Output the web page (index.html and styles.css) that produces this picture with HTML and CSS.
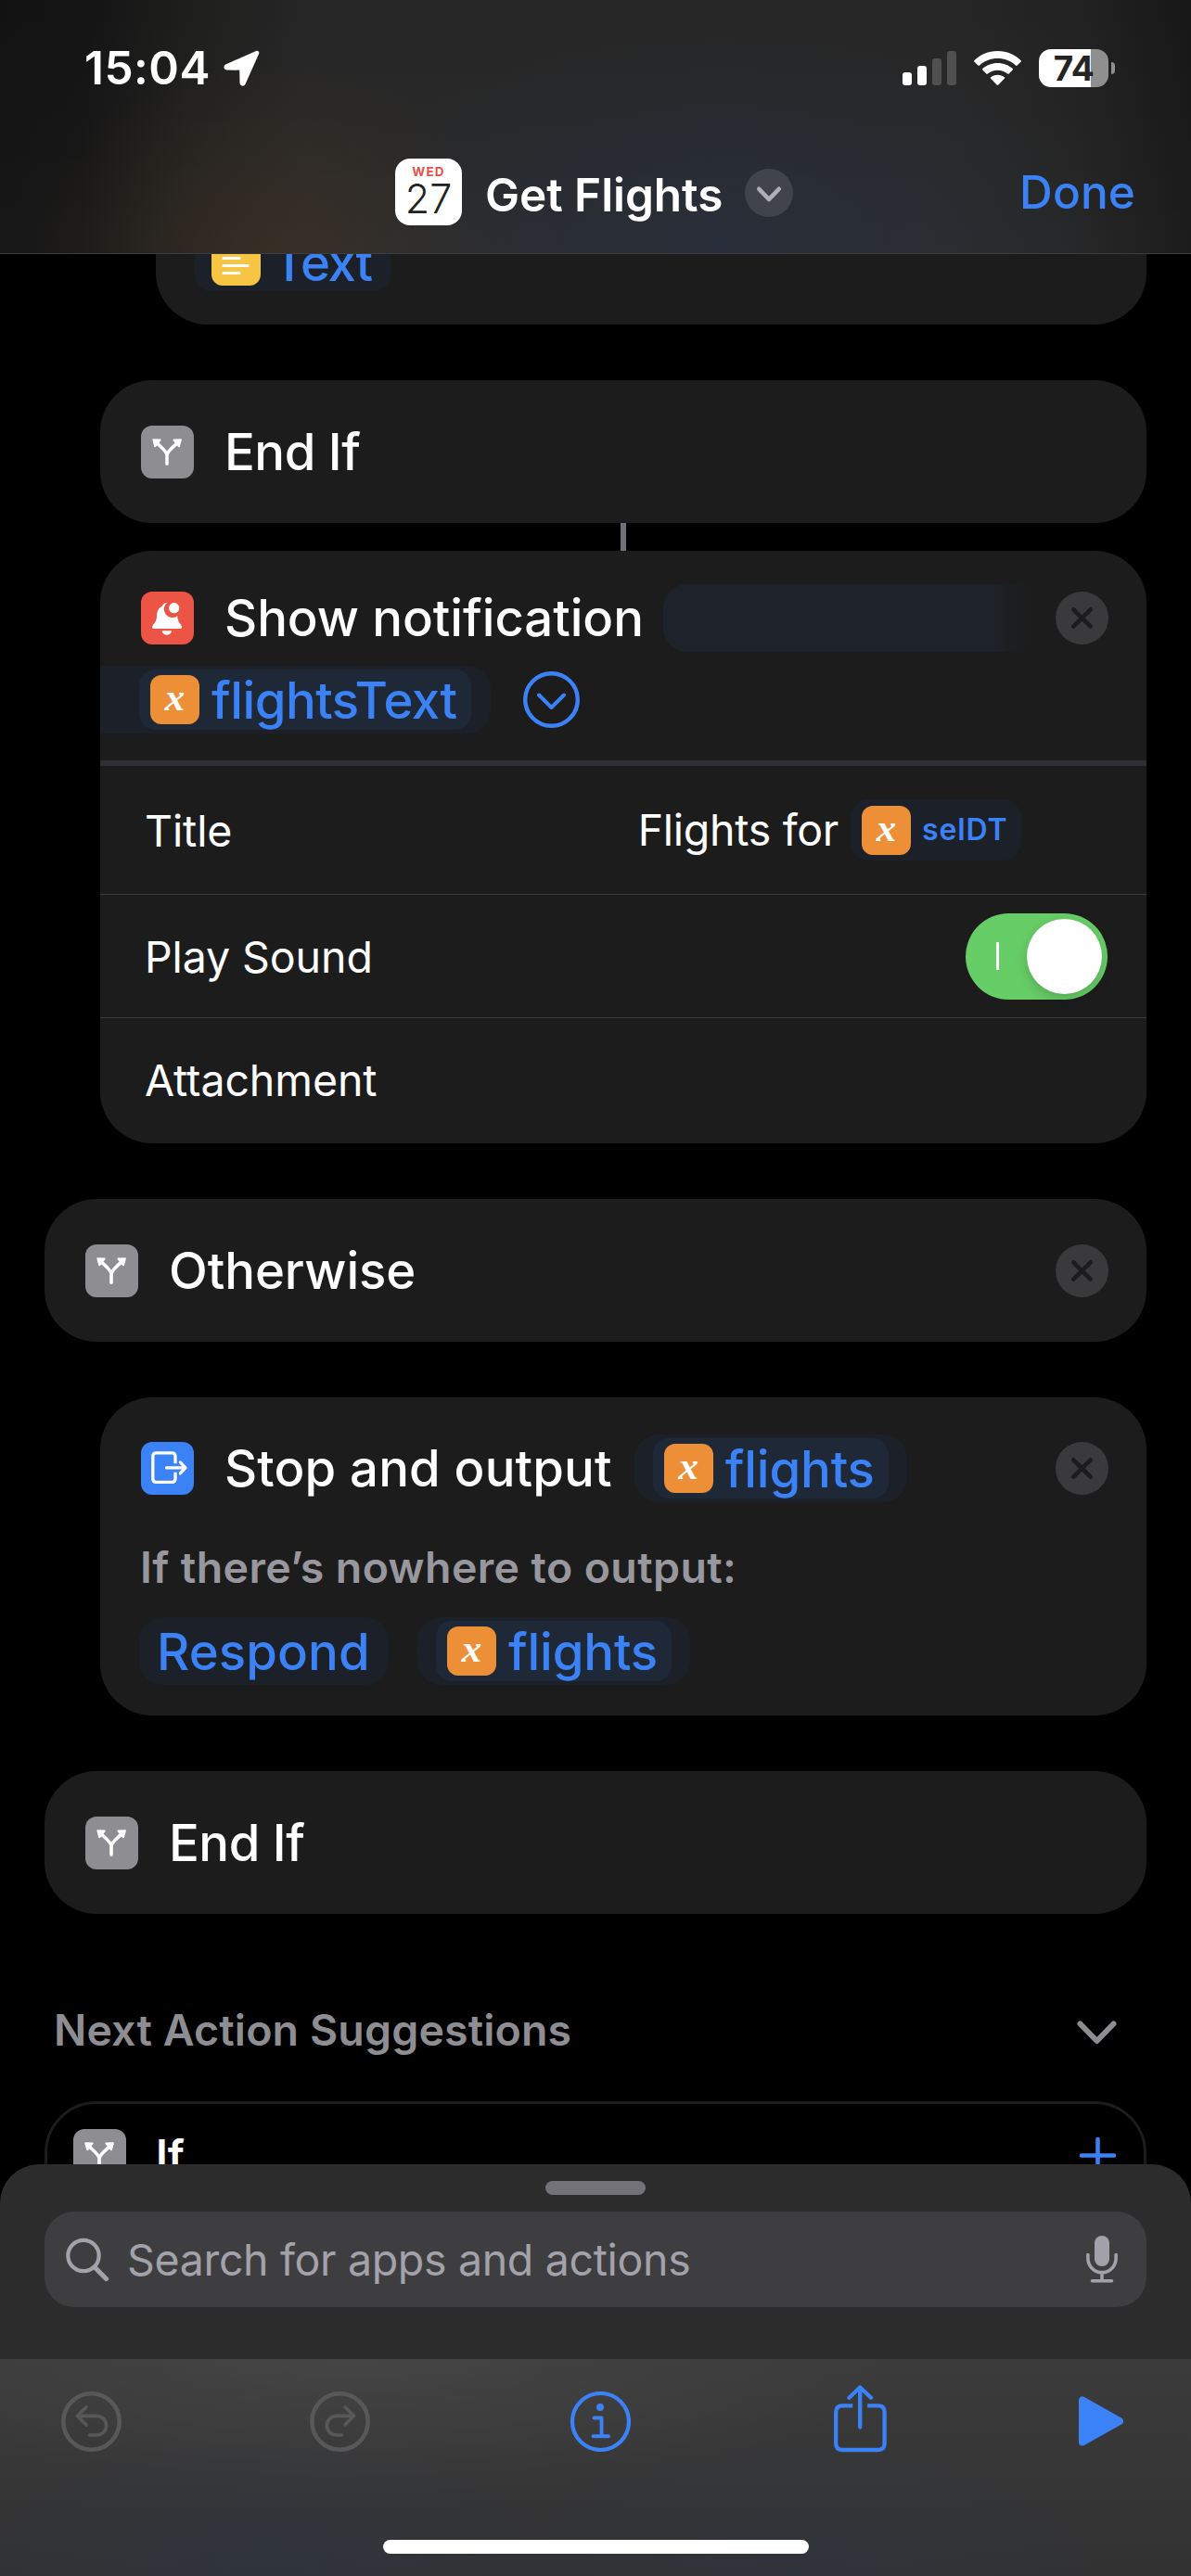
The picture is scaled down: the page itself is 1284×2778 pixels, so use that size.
FILE: index.html
```html
<!DOCTYPE html>
<html lang="en">
<head>
<meta charset="utf-8">
<title>Get Flights</title>
<link rel="stylesheet" href="styles.css">
</head>
<body>
<svg class="defs" width="0" height="0" aria-hidden="true">
  <symbol id="fork" viewBox="0 0 57 57">
    <path d="M28 41.3V32C28 27.5 20.5 22.5 17 18.5M28 32C28 27.5 35.7 22.5 39.2 18.5" fill="none" stroke="#fff" stroke-width="3.6" stroke-linecap="round"/>
    <path d="M13.2 15.2L20.8 15.4L15.2 22.4ZM43 15.2L35.3 15.4L41 22.4Z" fill="#fff" stroke="#fff" stroke-width="1.8" stroke-linejoin="round"/>
  </symbol>
  <symbol id="close" viewBox="0 0 57 57">
    <circle cx="28.5" cy="28.5" r="28.5" fill="#3a3a3c"/>
    <path d="M19.3 19.3L37.7 37.7M37.7 19.3L19.3 37.7" stroke="#1c1c1e" stroke-width="4.6" stroke-linecap="round"/>
  </symbol>
</svg>
<div class="phone">
  <header class="topbar">
    <div class="status">
      <span class="time">15:04</span>
      <svg class="location" width="39" height="39" viewBox="0 0 39 39"><path d="M36 3L3.2 17.6Q2 19 3.6 19.2L19.5 19.4L19.8 35.6Q20.4 37.4 21.5 35.5Z" fill="#fff" stroke="#fff" stroke-width="4.6" stroke-linejoin="round"/></svg>
      <div class="indicators">
        <svg width="58" height="37" viewBox="0 0 58 37"><rect y="23" width="10" height="14" rx="3" fill="#fff"/><rect x="16" y="16" width="10" height="21" rx="3" fill="#fff"/><rect x="32" y="8" width="10" height="29" rx="3" fill="#505050"/><rect x="48" width="10" height="37" rx="3" fill="#505050"/></svg>
        <svg width="51" height="37" viewBox="0 0 51 37"><g fill="#fff"><path d="M25.5 0C35.500 0 44.500 3.800 50.600 10.200Q51.200 11 50.500 11.700L46.600 15.600Q45.800 16.200 45 15.500C39.800 10.500 33 7.900 25.500 7.900S11.200 10.500 6 15.500Q5.200 16.200 4.400 15.600L.5 11.700Q-.2 11 .4 10.200C6.500 3.800 15.500 0 25.500 0Z"/><path d="M25.500 12.900C32 12.900 37.600 15.300 41.700 19.100Q42.400 19.900 41.700 20.600L37.700 24.600Q37 25.200 36.200 24.600C33.200 22.100 29.600 20.800 25.500 20.800S17.800 22.100 14.800 24.600Q14 25.200 13.300 24.600L9.300 20.600Q8.600 19.900 9.300 19.100C13.400 15.300 19 12.900 25.500 12.900Z"/><path d="M25.500 25.700C28.500 25.700 31 26.700 32.900 28.300Q33.600 29 32.900 29.700L26.300 36.400Q25.500 37.100 24.700 36.400L18.100 29.700Q17.400 29 18.100 28.300C20 26.700 22.500 25.700 25.500 25.700Z"/></g></svg>
        <div class="battery"><span class="battery-level">74</span><i class="battery-nub"></i></div>
      </div>
    </div>
    <div class="navbar">
      <div class="calendar"><span class="weekday">WED</span><span class="day">27</span></div>
      <h1 class="title">Get Flights</h1>
      <svg class="title-menu" width="52" height="52" viewBox="0 0 52 52"><circle cx="26" cy="26" r="26" fill="#41444b"/><path d="M15.300 21.800L26 33L36.700 21.800" fill="none" stroke="#aeb0b8" stroke-width="4.600" stroke-linecap="round" stroke-linejoin="round"/></svg>
      <span class="done">Done</span>
    </div>
  </header>

  <main class="editor">
    <section class="card nested2 clipped">
      <div class="token text-token">
        <svg width="53" height="53" viewBox="0 0 53 53"><rect width="53" height="53" rx="12" fill="#f5c543"/><path d="M13 15.500H39M13 23.500H30M13 31.500H39M13 39.500H30" stroke="#fff" stroke-width="3.200" stroke-linecap="round"/></svg>
        <span class="token-label">Text</span>
      </div>
    </section>

    <section class="card nested single">
      <span class="badge gray"><svg><use href="#fork"/></svg></span>
      <span class="action tight">End If</span>
    </section>
    <div class="connector"></div>

    <section class="card nested notification">
      <div class="row">
        <span class="badge red"><svg viewBox="0 0 57 57"><path fill="#fff" d="M28.300 11.900C24.200 12 23.300 14.400 23 15.600C18.600 17.800 17.200 21.600 17 26C16.700 31.500 15.500 33 13.200 35.600Q10.500 40 14 40H42Q45.500 40 43 35.600C40.500 32.500 39.600 31 39.200 26.200A8.600 8.600 0 0 1 28.300 12Z"/><circle cx="35.700" cy="17.700" r="5.600" fill="#fff"/><path fill="#fff" d="M22.500 42.300H33.200C32.600 45.300 30.500 46.700 27.800 46.700S23.100 45.300 22.500 42.300Z"/></svg></span>
        <span class="action">Show notification</span>
        <span class="blank-field"></span>
        <svg class="close"><use href="#close"/></svg>
      </div>
      <div class="row second">
        <div class="field continued"><div class="token"><i class="var">x</i><span class="token-label tight">flightsText</span></div></div>
        <svg class="disclosure" width="61" height="61" viewBox="0 0 61 61"><circle cx="30.500" cy="30.500" r="28.300" fill="none" stroke="#3c82f7" stroke-width="4.400"/><path d="M17 25.500L30.500 39L44 25.500" fill="none" stroke="#3c82f7" stroke-width="4" stroke-linecap="round" stroke-linejoin="round"/></svg>
      </div>
      <div class="option first">
        <span class="option-name">Title</span>
        <span class="value">Flights for</span>
        <div class="small-token"><i class="var">x</i><b>selDT</b></div>
      </div>
      <div class="option">
        <span class="option-name">Play Sound</span>
        <div class="toggle"><i class="toggle-mark"></i><i class="knob"></i></div>
      </div>
      <div class="option"><span class="option-name">Attachment</span></div>
    </section>

    <section class="card single">
      <span class="badge gray"><svg><use href="#fork"/></svg></span>
      <span class="action">Otherwise</span>
      <svg class="close"><use href="#close"/></svg>
    </section>

    <section class="card nested stop">
      <div class="row">
        <span class="badge blue"><svg viewBox="0 0 57 57" fill="none" stroke="#fff" stroke-width="3.300" stroke-linecap="round" stroke-linejoin="round"><path stroke-linecap="butt" d="M37 23.300V15.500Q37 11.800 33.300 11.800H16.500Q12.800 11.800 12.800 15.500V39.700Q12.800 43.400 16.500 43.400H33.300Q37 43.400 37 39.700V32.800"/><path d="M27.500 27.900H47.500M42.300 21.900L48 27.900L42.300 33.900"/></svg></span>
        <span class="action">Stop and output</span>
        <div class="field offset"><div class="token"><i class="var">x</i><span class="token-label">flights</span></div></div>
        <svg class="close"><use href="#close"/></svg>
      </div>
      <p class="hint">If there’s nowhere to output:</p>
      <div class="answer">
        <div class="field respond">Respond</div>
        <div class="field"><div class="token"><i class="var">x</i><span class="token-label">flights</span></div></div>
      </div>
    </section>

    <section class="card single">
      <span class="badge gray"><svg><use href="#fork"/></svg></span>
      <span class="action tight">End If</span>
    </section>

    <div class="suggestions-head">
      <h2>Next Action Suggestions</h2>
      <svg width="43" height="26" viewBox="0 0 43 26"><path d="M3.500 3.500L21.500 22L39.500 3.500" fill="none" stroke="#8e8d92" stroke-width="6" stroke-linecap="round" stroke-linejoin="round"/></svg>
    </div>
    <section class="suggestion">
      <span class="badge gray"><svg><use href="#fork"/></svg></span>
      <span class="suggestion-name">If</span>
      <svg class="plus" width="39" height="39" viewBox="0 0 39 39"><path d="M19.500 2V37M2 19.500H37" stroke="#3c82f7" stroke-width="4.500" stroke-linecap="round"/></svg>
    </section>
  </main>

  <footer class="dock">
    <i class="grabber"></i>
    <div class="search">
      <svg width="47" height="48" viewBox="0 0 47 48"><circle cx="19" cy="19.500" r="16.700" fill="none" stroke="#a3a2aa" stroke-width="4.200"/><path d="M31 32L43.500 44.500" stroke="#a3a2aa" stroke-width="5.200" stroke-linecap="round"/></svg>
      <span class="placeholder">Search for apps and actions</span>
      <svg class="mic" width="34" height="51" viewBox="0 0 34 51"><rect x="9" width="16" height="33" rx="8" fill="#a3a2aa"/><path d="M1.900 20.500V24.500A15.100 15.100 0 0 0 32.100 24.500V20.500M17 40V48.500M6.500 48.700H27.500" fill="none" stroke="#a3a2aa" stroke-width="3.600" stroke-linecap="round"/></svg>
    </div>
    <div class="toolbar">
      <div class="tools">
        <svg width="65" height="65" viewBox="0 0 65 65" fill="none" stroke="#58585a" stroke-linecap="round" stroke-linejoin="round"><circle cx="32.500" cy="32.500" r="30.200" stroke-width="4.600"/><path d="M27 16.700L17.500 26.300L27 36M18 26.300H38.300A10.300 10.300 0 0 1 38.300 47H30.800" stroke-width="3.700"/></svg>
        <svg width="65" height="65" viewBox="0 0 65 65" fill="none" stroke="#58585a" stroke-linecap="round" stroke-linejoin="round"><circle cx="32.500" cy="32.500" r="30.200" stroke-width="4.600"/><path d="M38 16.700L47.500 26.300L38 36M47 26.300H28.700A10.300 10.300 0 0 0 28.700 47H34.200" stroke-width="3.700"/></svg>
        <svg width="65" height="65" viewBox="0 0 65 65" fill="none" stroke="#3c82f7" stroke-linecap="round" stroke-linejoin="round"><circle cx="32.500" cy="32.500" r="30.500" stroke-width="4.200"/><circle cx="32" cy="17" r="4" fill="#3c82f7" stroke="none"/><path d="M25.500 28.500H33.500V48M24.500 48.200H41" stroke-width="3.900"/></svg>
        <svg class="share" width="57" height="73" viewBox="0 0 57 73" fill="none" stroke="#3c82f7" stroke-width="4.300"><path d="M20.300 22.400H9.200Q2.200 22.400 2.200 29.400V63Q2.200 70 9.200 70H47.600Q54.600 70 54.600 63V29.400Q54.600 22.400 47.600 22.400H36.200"/><path d="M28.200 45.500V3.500M16.500 13.700L28.200 2.500L40 13.700" stroke-linecap="round" stroke-linejoin="round"/></svg>
        <svg width="48" height="54" viewBox="0 0 48 54"><path d="M4 4.500V49.500L44 27Z" fill="#3c82f7" stroke="#3c82f7" stroke-width="8" stroke-linejoin="round"/></svg>
      </div>
      <i class="home-bar"></i>
    </div>
  </footer>
</div>
</body>
</html>
```

FILE: styles.css
```css
* { box-sizing: border-box; }
body { margin: 0; background: #000; }
svg { display: block; flex: none; }
.defs { position: absolute; }

.phone {
  position: relative;
  width: 1284px;
  height: 2778px;
  overflow: hidden;
  background: #000;
  color: #fff;
  font-family: Inter, "Liberation Sans", sans-serif;
  white-space: nowrap;
}

/* status and navigation bars */
.topbar {
  position: relative;
  z-index: 1;
  height: 274px;
  border-bottom: 1px solid #3d3d3e;
  background:
    radial-gradient(ellipse 260px 210px at 290px 274px, rgba(74, 54, 32, .42), transparent),
    radial-gradient(ellipse 420px 230px at 780px 260px, rgba(38, 50, 72, .5), transparent),
    linear-gradient(to bottom, transparent, rgba(255, 255, 255, .025)),
    linear-gradient(to right, #121212 0, #141414 90px, #1e1e1d 200px, #262626 330px, #262626 1030px, #222 1160px, #171717 1284px);
}
.status { display: flex; align-items: center; height: 146px; padding: 0 82px 0 91px; }
.time { font-size: 49.5px; font-weight: 600; letter-spacing: .5px; line-height: 60px; }
.location { margin-left: 14px; }
.indicators { display: flex; align-items: center; gap: 19px; margin-left: auto; }
.battery { display: flex; align-items: center; gap: 3px; }
.battery-level {
  width: 75px;
  height: 41px;
  border-radius: 13px;
  background: linear-gradient(to right, #fff 56px, #8f8f8f 56px);
  color: #242424;
  font-size: 37px;
  font-weight: 700;
  letter-spacing: -.4px;
  line-height: 42px;
  text-align: center;
}
.battery-nub { width: 4px; height: 13px; border-radius: 0 5px 5px 0; background: #8f8f8f; }
.navbar { display: flex; align-items: center; height: 124px; padding: 0 60px 0 426px; }
.calendar {
  display: flex;
  flex-direction: column;
  align-items: center;
  width: 72px;
  height: 72px;
  margin-top: -2px;
  padding-top: 6px;
  border-radius: 16px;
  background: #fff;
}
.weekday { color: #e2534c; font-size: 13.5px; font-weight: 700; letter-spacing: 1.2px; line-height: 16px; }
.day { color: #222; font-size: 43px; font-weight: 300; line-height: 42px; }
.title { margin: 3px 0 0 25px; font-size: 49.5px; font-weight: 600; line-height: 60px; letter-spacing: -.05px; }
.title-menu { margin-left: 24px; }
.done { margin: -2px 0 0 auto; color: #3c82f7; font-size: 49.5px; font-weight: 500; line-height: 60px; letter-spacing: .1px; }

/* action list */
.editor { display: flex; flex-direction: column; align-items: flex-end; height: 2504px; overflow: hidden; padding-right: 48px; }
.card { flex: none; width: 1188px; margin-bottom: 60px; border-radius: 56px; background: #1c1c1c; overflow: hidden; }
.nested { width: 1128px; }
.nested2 { width: 1068px; }
.clipped { height: 150px; margin-top: -74px; padding: 41px 42px 0; }
.single { display: flex; align-items: center; height: 154px; padding: 0 41px 0 44px; }
.row { display: flex; align-items: center; height: 73px; padding: 0 41px 0 44px; }
.badge { flex: none; width: 57px; height: 57px; border-radius: 12px; }
.badge svg, .close { width: 57px; height: 57px; }
.gray { background: #8e8d92; }
.red { background: #ec5545; }
.blue { background: #3c82f7; }
.action { margin-left: 33px; font-size: 54.5px; font-weight: 500; line-height: 73px; letter-spacing: -.08px; }
.close { margin-left: auto; }
.connector { flex: none; width: 6px; height: 30px; margin: -60px 561px 0 0; background: #6f6f77; }

.field { display: flex; align-items: center; height: 73px; padding: 0 20px; border-radius: 26px; background: #1c2129; }
.token { display: flex; align-items: center; height: 65px; padding: 0 15px 0 12px; border-radius: 17px; background: #1e2836; color: #3c82f7; }
.token-label { margin: 2px 0 0 13px; font-size: 54.5px; font-weight: 500; line-height: 63px; letter-spacing: -.15px; }
.tight { letter-spacing: -.5px; }
.text-token { width: 211px; height: 73px; padding: 7px 0 0 18px; border-radius: 18px; background: #1c2129; }
.text-token .token-label { margin-top: 4px; letter-spacing: -1.3px; }
.var {
  flex: none;
  width: 53px;
  height: 53px;
  border-radius: 12px;
  background: #ed8f37;
  color: #fff;
  font: italic bold 43px/48px "Liberation Serif", serif;
  text-align: center;
}
.notification { height: 639px; padding-top: 36px; }
.blank-field { width: 401px; height: 73px; margin-left: 21px; border-radius: 26px 0 0 26px; background: linear-gradient(to right, #1e222a 88%, rgba(30, 34, 42, .4) 93%, rgba(30, 34, 42, 0)); }
.second { margin-top: 15px; padding-left: 0; }
.continued { width: 421px; padding-left: 42px; border-radius: 0 26px 26px 0; }
.disclosure { margin-left: 35px; }
.option { display: flex; align-items: center; height: 133px; padding: 0 42px 0 48px; border-top: 1.5px solid #3a3a3b; font-size: 46.5px; line-height: 60px; }
.option-name { margin-top: 2px; letter-spacing: -.1px; }
.option.first { height: 144px; margin-top: 29px; padding-right: 135px; border-top: 6px solid #2f2f33; }
.value { margin-left: auto; letter-spacing: -.3px; }
.small-token { display: flex; align-items: center; width: 184px; height: 66px; margin-left: 13px; padding-left: 12px; border-radius: 20px; background: #1c2129; color: #3c82f7; }
.small-token b { margin-left: 12px; font-size: 32px; font-weight: 600; letter-spacing: .85px; }
.toggle { display: flex; align-items: center; justify-content: space-between; width: 153px; height: 93px; margin-left: auto; padding: 0 6px 0 33px; border-radius: 47px; background: #67ce67; }
.toggle-mark { width: 3px; height: 30px; background: #fff; }
.knob { width: 81px; height: 81px; border-radius: 50%; background: #fff; box-shadow: 0 5px 14px rgba(0, 0, 0, .18); }

.stop { height: 343px; padding-top: 40px; }
.stop .action { letter-spacing: .14px; }
.offset { margin-left: 24px; }
.hint { margin: 40px 0 24px 43px; color: #98979e; font-size: 46.5px; font-weight: 600; line-height: 60px; letter-spacing: .38px; }
.answer { display: flex; gap: 31px; padding-left: 42px; }
.respond { width: 269px; padding-left: 19px; color: #3c82f7; font-size: 54.5px; font-weight: 500; letter-spacing: .1px; }

.suggestions-head { display: flex; flex: none; align-items: center; justify-content: space-between; width: 1188px; height: 202px; margin-top: -60px; padding: 48px 32px 0 10px; }
.suggestions-head svg { margin-top: 5px; }
.suggestions-head h2 { margin: 0; color: #8e8d92; font-size: 46.5px; font-weight: 600; line-height: 60px; letter-spacing: .13px; }
.suggestion { display: flex; flex: none; width: 1188px; height: 200px; padding: 27px 30px 0 28px; border: 3px solid #1c1c1d; border-radius: 56px; }
.suggestion-name { margin-left: 32px; font-size: 46.5px; font-weight: 600; line-height: 57px; }
.plus { margin: 9px 0 0 auto; }

/* search sheet and toolbar lie over the list */
.dock { position: absolute; left: 0; right: 0; bottom: 0; display: flex; flex-direction: column; align-items: center; height: 444px; padding-top: 18px; border-radius: 42px 42px 0 0; background: #2c2c2c; overflow: hidden; }
.grabber { flex: none; width: 108px; height: 15px; border-radius: 8px; background: #737278; }
.search { display: flex; flex: none; align-items: center; width: 1188px; height: 103px; margin: 18px 0 56px; padding: 0 31px 0 23px; border-radius: 32px; background: #3e3e40; color: #a3a2aa; }
.placeholder { margin-left: 19px; font-size: 46.5px; letter-spacing: -.34px; line-height: 60px; }
.mic { margin-left: auto; }
.toolbar {
  flex: none;
  width: 100%;
  height: 234px;
  background:
    radial-gradient(ellipse 600px 150px at 380px 0, rgba(255, 255, 255, .05), transparent),
    radial-gradient(ellipse 330px 150px at 290px 234px, rgba(40, 56, 80, .3), transparent),
    radial-gradient(ellipse 330px 150px at 860px 234px, rgba(40, 56, 80, .25), transparent),
    linear-gradient(to bottom, #3b3b3b, #323233);
}
.tools { display: grid; grid-template-columns: 268px 281px 284px 264px 48px; align-items: center; height: 134px; padding-left: 66px; }
.share { margin-top: -6px; }
.home-bar { display: block; width: 459px; height: 15px; margin: 61px auto 0; border-radius: 8px; background: #fff; }
```
